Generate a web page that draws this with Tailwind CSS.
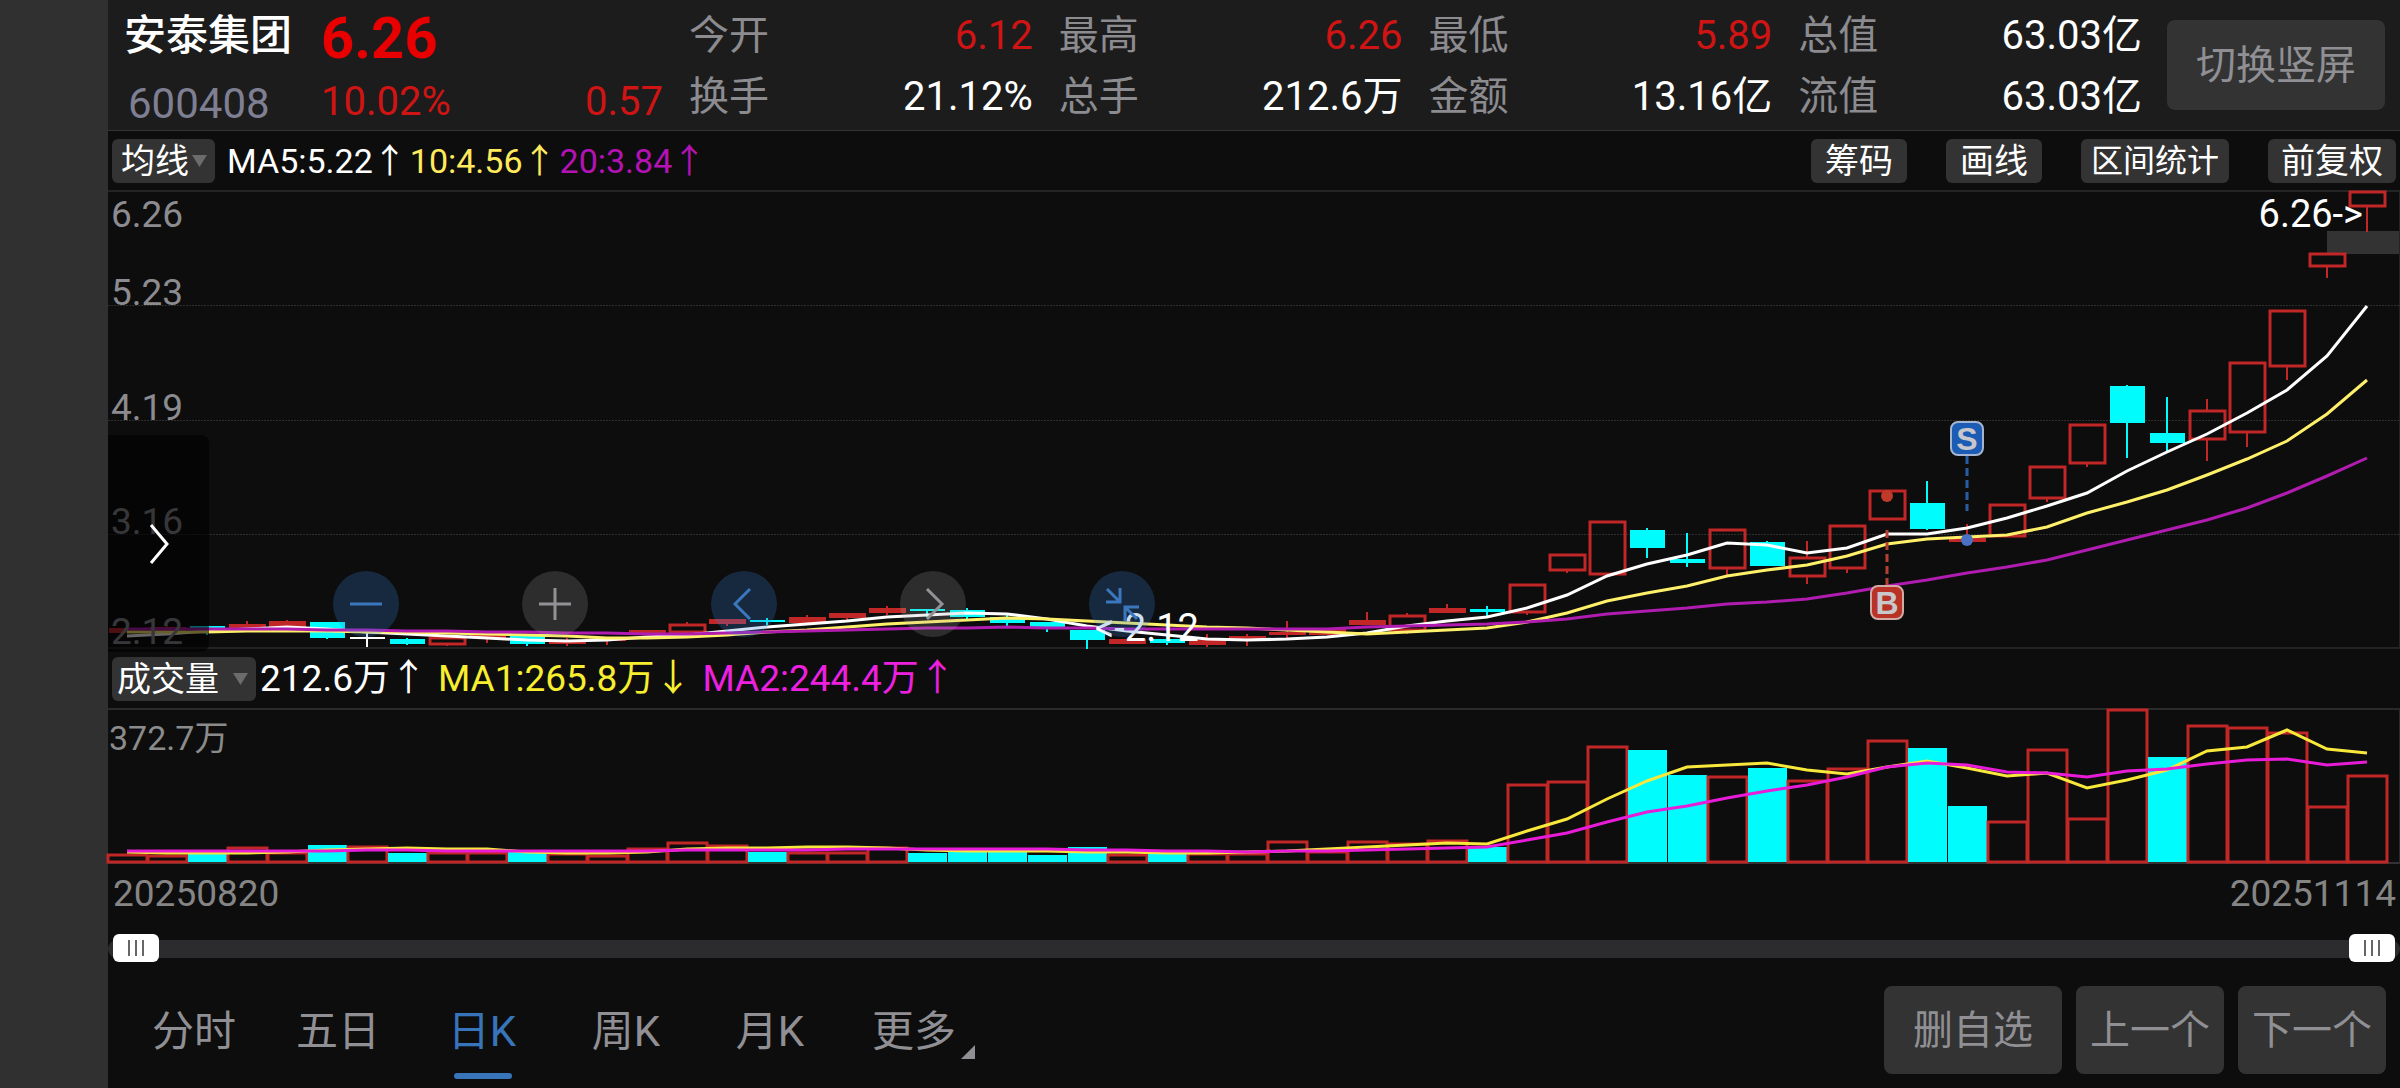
<!DOCTYPE html>
<html lang="zh-CN">
<head>
  <meta charset="UTF-8" />
  <meta name="viewport" content="width=device-width, initial-scale=1.0"/>
  <title>安泰集团 600408</title>
  <script src="https://cdn.jsdelivr.net/npm/@tailwindcss/browser@4"></script>
</head>
<body class="bg-[#0d0d0d] text-white font-['Roboto','Noto_Sans_CJK_SC',sans-serif] flex min-h-screen overflow-x-hidden">

  <aside class="w-[108px] shrink-0 bg-[#303030]"></aside>

  <main class="flex-1 min-w-0 flex flex-col">

    <!-- Quote header -->
    <header class="h-[131px] bg-[#1c1c1c] border-b border-[#333] flex text-[40px] leading-[60px] whitespace-nowrap">
      <div class="w-[213px] shrink-0 pl-4 pt-[6px] text-[42px]">
        <h1 class="font-medium">安泰集团</h1>
        <div class="text-[#7f7f93] pl-1 pt-2">600408</div>
      </div>
      <div class="w-[342px] shrink-0 pt-2 text-[#d01414]">
        <div class="text-[58px] font-bold text-[#e80000]">6.26</div>
        <div class="flex justify-between pt-1"><span>10.02%</span><span>0.57</span></div>
      </div>
      <dl class="flex-1 ml-[26px] pt-[6px] grid grid-cols-4 gap-x-[26px] gap-y-px content-start">
        <div class="flex justify-between"><dt class="text-[#8b8b90]">今开</dt><dd class="text-[#d01414]">6.12</dd></div>
        <div class="flex justify-between"><dt class="text-[#8b8b90]">最高</dt><dd class="text-[#d01414]">6.26</dd></div>
        <div class="flex justify-between"><dt class="text-[#8b8b90]">最低</dt><dd class="text-[#d01414]">5.89</dd></div>
        <div class="flex justify-between"><dt class="text-[#8b8b90]">总值</dt><dd>63.03亿</dd></div>
        <div class="flex justify-between"><dt class="text-[#8b8b90]">换手</dt><dd>21.12%</dd></div>
        <div class="flex justify-between"><dt class="text-[#8b8b90]">总手</dt><dd>212.6万</dd></div>
        <div class="flex justify-between"><dt class="text-[#8b8b90]">金额</dt><dd>13.16亿</dd></div>
        <div class="flex justify-between"><dt class="text-[#8b8b90]">流值</dt><dd>63.03亿</dd></div>
      </dl>
      <button class="w-[218px] h-[90px] mt-5 ml-[25px] mr-[15px] pt-[2px] shrink-0 rounded-lg bg-[#333] text-[#8f8f94]">切换竖屏</button>
    </header>

    <!-- Moving average toolbar -->
    <section class="h-[59px] flex items-center pl-1 pr-1 text-[34px] leading-[44px] whitespace-nowrap">
      <div class="relative">
        <select aria-label="指标" class="appearance-none block w-[103px] h-[44px] rounded-md bg-[#333] pl-[9px]">
          <option>均线</option>
        </select>
        <svg class="absolute right-2 top-4 pointer-events-none" width="15" height="12" viewBox="0 0 15 12"><path d="M0 0h15L7.500 12z" fill="#6c6c6c"/></svg>
      </div>
      <div class="ml-3 flex gap-[3px]">
        <span>MA5:5.22↑</span>
        <span class="text-[#ffe95c]">10:4.56↑</span>
        <span class="text-[#b412b4]">20:3.84↑</span>
      </div>
      <div class="ml-auto flex gap-[39px]">
        <button class="w-[96px] h-[44px] rounded-md bg-[#333]">筹码</button>
        <button class="w-[96px] h-[44px] rounded-md bg-[#333]">画线</button>
        <button class="w-[148px] h-[44px] rounded-md bg-[#333] text-[32px]">区间统计</button>
        <button class="w-[128px] h-[44px] rounded-md bg-[#333]">前复权</button>
      </div>
    </section>

    <!-- Candlestick chart -->
    <section class="relative h-[459px] border-y-2 border-r border-[#242424]">
      <svg id="kline" class="block w-full h-full" viewBox="108 192 2291 455" preserveAspectRatio="none" overflow="visible"></svg>

      <div class="absolute left-[3px] inset-y-0 text-[37px] leading-[44px] text-[#8b8b90]">
        <div class="absolute top-[1px]">6.26</div>
        <div class="h-[123px] flex items-end">5.23</div>
        <div class="h-[115px] flex items-end">4.19</div>
        <div class="h-[114px] flex items-end">3.16</div>
        <div class="h-[110px] flex items-end">2.12</div>
      </div>

      <div class="absolute top-0 right-[36px] text-[38px] leading-[44px]">6.26-&gt;</div>
      <div class="absolute top-[414px] left-[987px] text-[38px] leading-[44px]">&lt;-2.12</div>

      <div id="marks"></div>

      <div class="absolute left-[225px] top-[379px] flex gap-[123px]">
        <button aria-label="缩小" class="size-[66px] rounded-full bg-[#3981d9]/25">
          <svg viewBox="0 0 66 66" fill="none" stroke="#3b77bd" stroke-width="3"><path d="M17 33h32"/></svg>
        </button>
        <button aria-label="放大" class="size-[66px] rounded-full bg-[#adadad]/20">
          <svg viewBox="0 0 66 66" fill="none" stroke="#929296" stroke-width="3"><path d="M17 33h32M33 17v32"/></svg>
        </button>
        <button aria-label="左移" class="size-[66px] rounded-full bg-[#3981d9]/25">
          <svg viewBox="0 0 66 66" fill="none" stroke="#3b77bd" stroke-width="3"><path d="M39 18L24 33l15 15"/></svg>
        </button>
        <button aria-label="右移" class="size-[66px] rounded-full bg-[#adadad]/20">
          <svg viewBox="0 0 66 66" fill="none" stroke="#929296" stroke-width="3"><path d="M27 18l15 15-15 15"/></svg>
        </button>
        <button aria-label="收起" class="size-[66px] rounded-full bg-[#3981d9]/25">
          <svg viewBox="0 0 66 66" fill="none" stroke="#3b77bd" stroke-width="3"><path d="M17 31h14V17M18 18l12 12M50 36H36v14M48 48L37 37"/></svg>
        </button>
      </div>

      <button aria-label="展开" class="absolute left-0 top-[243px] w-[101px] h-[217px] rounded-r-lg bg-black/60">
        <svg viewBox="0 0 101 217" fill="none" stroke="#fff" stroke-width="3"><path d="M43 90l16 19-16 19"/></svg>
      </button>
    </section>

    <!-- Volume toolbar -->
    <section class="h-[59px] flex items-center pl-1 text-[37px] leading-[44px] whitespace-nowrap">
      <div class="relative">
        <select aria-label="副图指标" class="appearance-none block w-[144px] h-[44px] rounded-md bg-[#333] pl-[5px] text-[34px]">
          <option>成交量</option>
        </select>
        <svg class="absolute right-2 top-4 pointer-events-none" width="15" height="12" viewBox="0 0 15 12"><path d="M0 0h15L7.500 12z" fill="#6c6c6c"/></svg>
      </div>
      <div class="ml-1 flex gap-[11px]">
        <span>212.6万↑</span>
        <span class="text-[#f8ee30]">MA1:265.8万↓</span>
        <span class="text-[#ee20e0]">MA2:244.4万↑</span>
      </div>
    </section>

    <!-- Volume chart -->
    <section class="relative h-[156px] border-t-2 border-r border-[#2a2a2a]">
      <svg id="volume" class="block w-full h-full" viewBox="108 710 2291 154" preserveAspectRatio="none" overflow="visible"></svg>
      <div class="absolute left-[1px] top-[6px] text-[34px] leading-[44px] text-[#8b8b8b]">372.7万</div>
    </section>

    <div class="h-[60px] flex justify-between items-center pl-[5px] pr-1 text-[37px] text-[#858585]">
      <span>20250820</span>
      <span>20251114</span>
    </div>

    <!-- Date range -->
    <div class="relative mt-4 mb-4 h-[18px] rounded-full bg-[#2c2c2e]">
      <input type="range" min="0" max="100" value="0" aria-label="开始日期" class="absolute left-[5px] -top-[6px] w-1/2 h-[28px] appearance-none bg-transparent [&::-webkit-slider-thumb]:appearance-none [&::-webkit-slider-thumb]:w-[46px] [&::-webkit-slider-thumb]:h-[28px] [&::-webkit-slider-thumb]:rounded-md [&::-webkit-slider-thumb]:bg-white [&::-webkit-slider-thumb]:bg-[linear-gradient(90deg,#666_2px,transparent_2px,transparent_7px,#666_7px,#666_9px,transparent_9px,transparent_14px,#666_14px)] [&::-webkit-slider-thumb]:bg-[length:16px_16px] [&::-webkit-slider-thumb]:bg-no-repeat [&::-webkit-slider-thumb]:bg-center"/>
      <input type="range" min="0" max="100" value="100" aria-label="结束日期" class="absolute right-[5px] -top-[6px] w-1/3 h-[28px] appearance-none bg-transparent [&::-webkit-slider-thumb]:appearance-none [&::-webkit-slider-thumb]:w-[46px] [&::-webkit-slider-thumb]:h-[28px] [&::-webkit-slider-thumb]:rounded-md [&::-webkit-slider-thumb]:bg-white [&::-webkit-slider-thumb]:bg-[linear-gradient(90deg,#666_2px,transparent_2px,transparent_7px,#666_7px,#666_9px,transparent_9px,transparent_14px,#666_14px)] [&::-webkit-slider-thumb]:bg-[length:16px_16px] [&::-webkit-slider-thumb]:bg-no-repeat [&::-webkit-slider-thumb]:bg-center"/>
    </div>

    <!-- Period tabs -->
    <footer class="flex justify-between pt-3 pl-[14px] pr-[14px] pb-[14px] whitespace-nowrap">
      <nav class="grid grid-cols-6 w-[864px] h-[88px] text-[42px] text-[#8f8f94]">
        <button class="pt-[2px]">分时</button>
        <button class="pt-[2px]">五日</button>
        <button class="pt-[2px] relative text-[#3874ba]">日K<span class="absolute left-[44px] top-[87px] w-[58px] h-[6px] rounded-full bg-[#3874ba]"></span></button>
        <button class="pt-[2px]">周K</button>
        <button class="pt-[2px]">月K</button>
        <button class="pt-[2px] relative">更多<svg class="absolute right-[11px] top-[59px]" width="14" height="14" viewBox="0 0 14 14"><path d="M14 0v14H0z" fill="#8f8f94"/></svg></button>
      </nav>
      <div class="flex gap-[14px] text-[40px] text-[#8f8f94]">
        <button class="w-[178px] h-[88px] pt-[2px] rounded-lg bg-[#333]">删自选</button>
        <button class="w-[148px] h-[88px] pt-[2px] rounded-lg bg-[#333]">上一个</button>
        <button class="w-[148px] h-[88px] pt-[2px] rounded-lg bg-[#333]">下一个</button>
      </div>
    </footer>
  </main>

<script>
const RED = '#c12727', CYAN = '#00fcfc';
const STEP = 40, FIRST = 127;
const cx = i => FIRST + i * STEP;

// [type, high, body top, body bottom, low]
const candles = [
  ['r',628,628,633,633], ['r',625,627,631,631], ['c',626,626,628,635], ['r',621,624,629,629], ['r',620,621,627,627],
  ['c',622,622,638,639], ['w',630,637,639,647], ['c',638,639,644,645], ['r',637,637,645,646], ['r',634,634,638,643],
  ['c',636,636,644,646], ['r',638,640,644,646], ['r',638,638,641,645], ['r',630,630,634,634], ['r',622,624,633,633],
  ['r',619,619,624,626], ['c',618,620,622,625], ['r',615,617,623,623], ['r',613,613,618,622], ['r',606,608,613,615],
  ['c',609,609,611,617], ['c',608,610,617,619], ['c',615,617,623,626], ['c',622,622,627,632], ['c',630,630,640,649],
  ['r',639,639,644,644], ['c',637,639,643,645], ['r',634,640,645,647], ['r',634,636,639,646], ['r',621,632,635,638],
  ['r',629,629,635,635], ['r',612,620,625,625], ['r',613,615,631,634], ['r',604,608,613,613], ['c',606,609,612,616],
  ['r',584,584,613,615], ['r',554,554,571,573], ['r',521,521,575,575], ['c',528,530,548,558], ['c',533,559,563,567],
  ['r',529,529,569,576], ['c',541,542,566,566], ['r',541,557,577,584], ['r',525,525,569,573], ['r',490,490,520,520],
  ['c',481,503,529,530], ['r',524,538,542,542], ['r',504,504,537,537], ['r',466,466,499,502], ['r',424,424,464,467],
  ['c',385,386,423,458], ['c',397,433,443,452], ['r',399,410,440,461], ['r',362,362,433,447], ['r',310,310,367,380],
  ['r',253,253,267,278], ['r',191,191,207,232]
];

const ma5 = [636,634,631,629,627,629,632,634,636,638,640,641,640,637,635,631,627,624,621,617,615,613,614,619,626,631,635,639,640,639,637,633,626,621,617,608,595,576,564,555,543,545,553,548,534,534,528,518,506,493,471,452,434,413,390,356,306];
const ma10 = [632,632,632,631,631,631,632,632,633,634,635,636,638,638,637,635,632,630,627,624,622,620,618,619,621,623,625,627,628,630,632,634,632,630,628,622,613,601,593,586,576,570,565,556,544,539,537,535,527,513,502,490,475,459,441,414,380];
const ma20 = [629,629,629,629,629,630,630,631,631,632,632,633,633,634,634,633,632,631,630,629,628,628,627,628,628,629,629,629,629,629,629,627,626,625,624,622,619,614,611,608,604,602,599,593,586,580,573,567,560,550,540,530,520,508,493,476,458];

// [type, bar top]
const volumes = [
  ['r',854], ['r',855], ['c',853], ['r',847], ['r',852], ['c',845], ['r',846], ['c',853], ['r',852], ['r',852],
  ['c',852], ['r',853], ['r',855], ['r',848], ['r',842], ['r',845], ['c',852], ['r',852], ['r',852], ['r',847],
  ['c',853], ['c',852], ['c',852], ['c',855], ['c',847], ['r',854], ['c',854], ['r',853], ['r',853], ['r',841],
  ['r',851], ['r',841], ['r',843], ['r',840], ['c',847], ['r',784], ['r',781], ['r',746], ['c',750], ['c',775],
  ['r',776], ['c',768], ['r',780], ['r',768], ['r',740], ['c',748], ['c',806], ['r',821], ['r',749], ['r',818],
  ['r',709], ['c',757], ['r',725], ['r',727], ['r',732], ['r',806], ['r',775]
];
const vma1 = [852,853,853,853,852,850,849,848,849,849,852,853,853,852,849,848,848,847,847,848,850,851,851,851,852,852,853,853,852,851,849,847,845,843,844,831,819,799,781,767,765,763,770,774,767,761,768,776,773,788,780,770,751,747,730,749,753];
const vma2 = [851,851,851,851,851,851,850,850,851,851,851,851,851,851,850,850,850,850,849,849,849,849,849,849,850,850,851,851,852,851,851,850,849,848,847,840,833,822,812,806,798,791,785,777,767,763,765,772,773,777,771,769,764,760,759,765,762];

function line(points, color) {
  return `<polyline fill="none" stroke="${color}" stroke-width="3" points="${points.map((y, i) => cx(i) + ',' + y).join(' ')}"/>`;
}

function drawCandle([type, high, top, bottom, low], i) {
  const x = cx(i);
  if (type !== 'r') {
    const color = type === 'w' ? '#fff' : CYAN;
    return `<path d="M${x} ${high}V${low}" stroke="${color}" stroke-width="2"/>
      <rect x="${x - 17}" y="${top}" width="35" height="${bottom - top}" fill="${color}"/>`;
  }
  const wick = `<path d="M${x} ${high}V${top}M${x} ${bottom}V${low}" stroke="${RED}" stroke-width="2"/>`;
  // thin bodies have no room for an outline
  if (bottom - top < 7) {
    return wick + `<rect x="${x - 18}" y="${top}" width="37" height="${bottom - top}" fill="${RED}"/>`;
  }
  return wick + `<rect x="${x - 17}" y="${top + 1}" width="35" height="${bottom - top - 2}" fill="none" stroke="${RED}" stroke-width="3"/>`;
}

function drawVolume([type, top], i) {
  const x = cx(i);
  return type === 'c'
    ? `<rect x="${x - 19}" y="${top}" width="39" height="${862 - top}" fill="${CYAN}"/>`
    : `<rect x="${x - 19}" y="${top + 1}" width="39" height="${861 - top}" fill="none" stroke="${RED}" stroke-width="3"/>`;
}

const grid = [305, 420, 534].map(y => `<path d="M108 ${y}.5H2399" stroke="#2e2e2e" stroke-dasharray="2 1"/>`).join('');

document.getElementById('kline').innerHTML = grid
  + '<rect x="2327" y="231" width="72" height="23" fill="#333"/>'
  + candles.map(drawCandle).join('')
  + line(ma5, '#fff') + line(ma10, '#fff06a') + line(ma20, '#b01cb0')
  + '<path d="M1887 530V585" stroke="#b5402f" stroke-width="3" stroke-dasharray="8 4"/>'
  + '<path d="M1967 456V511" stroke="#2a5ca6" stroke-width="3" stroke-dasharray="8 4"/>'
  + '<circle cx="1887" cy="496" r="6" fill="#bf3a2a"/><circle cx="1967" cy="540" r="6" fill="#4a72c4"/>';

document.getElementById('volume').innerHTML = '<path d="M108 863H2399" stroke="#333" stroke-width="2"/>'
  + volumes.map(drawVolume).join('')
  + line(vma1, '#f8e83c') + line(vma2, '#e81cd8');

// buy / sell badges
const marks = [
  { text: 'B', index: 44, cls: 'top-[393px] bg-[#b83325] border-[#d0aaa5]' },
  { text: 'S', index: 46, cls: 'top-[229px] bg-[#1c5cb4] border-[#a5b5d0]' }
];
document.getElementById('marks').innerHTML = marks.map(m => `
  <span class="absolute -translate-x-1/2 w-[34px] h-[35px] rounded-lg border-2 flex items-center justify-center font-['Liberation_Sans',sans-serif] font-bold text-[32px] leading-none text-[#c8c8cc] ${m.cls}"
    style="left:${(cx(m.index) - 108) / 2291 * 100}%">${m.text}</span>`).join('');
</script>

</body>
</html>
